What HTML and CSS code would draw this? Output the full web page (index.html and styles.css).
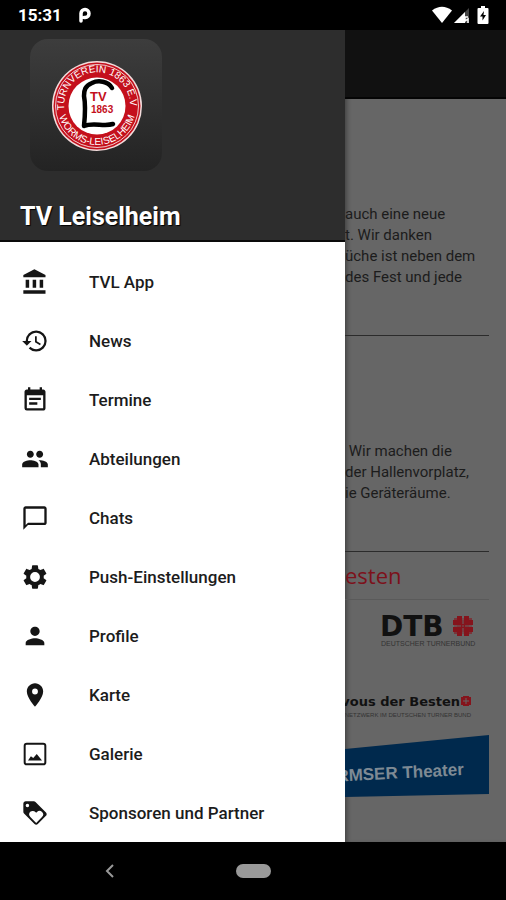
FILE: index.html
```html
<!DOCTYPE html>
<html lang="de">
<head>
<meta charset="utf-8">
<meta name="viewport" content="width=device-width, initial-scale=1">
<title>TV Leiselheim</title>
<link rel="stylesheet" href="styles.css">
</head>
<body>
<div class="status">
  <time class="clock">15:31</time>
  <svg class="status-p" viewBox="0 0 14 16" aria-hidden="true"><path d="M3 14V6.300a4 4 0 1 1 4.200 4.200H6" fill="none" stroke="#fff" stroke-width="3.500" stroke-linecap="round" stroke-linejoin="round"/></svg>
  <svg class="status-icons" viewBox="0 0 58 18" aria-hidden="true">
    <path d="M0 4.500Q10-3 20 4.500L10 17z" fill="#fff"/>
    <path d="M22 17L37 2V17z" fill="#444"/>
    <path d="M22 17L33 6v11z" fill="#fff"/>
    <path d="M33 11h3M33 11v4l3-2v4" fill="none" stroke="#fff" stroke-width="1.500"/>
    <path d="M49 0h4v2h2.500q1 0 1 1v14q0 1-1 1h-9q-1 0-1-1V3q0-1 1-1H49z" fill="#fff"/>
    <path d="M52 5l-4 5.500h2.500V14.500L54 9h-2.500z" fill="#000"/>
  </svg>
</div>

<div class="stage">
  <aside class="drawer">
    <header class="drawer-head">
      <div class="app-tile">
        <svg viewBox="0 0 92 92" role="img" aria-label="Vereinswappen">
          <defs>
            <path id="arc-top" d="M13.500 50a33 33 0 1 1 64.500 4"/>
            <path id="arc-bottom" d="M7 46a39 39 0 0 0 78 0"/>
          </defs>
          <circle cx="46" cy="46" r="45" fill="#f3dcdc"/>
          <circle cx="46" cy="46" r="43.500" fill="#c4101c"/>
          <circle cx="46" cy="46" r="41.500" fill="none" stroke="#f0cccc" stroke-width="1"/>
          <circle cx="46" cy="46" r="28.500" fill="#fff"/>
          <g class="ring-text">
            <text><textPath href="#arc-top">TURNVEREIN 1863 E.V</textPath></text>
            <text text-anchor="middle"><textPath href="#arc-bottom" startOffset="50%">WORMS-LEISELHEIM</textPath></text>
          </g>
          <path d="M61 28C57 21 47 20 41 23C34 26 33 30 33 36C35 46 34 56 33 66C42 62 53 67 62 64" fill="none" stroke="#000" stroke-width="4.500" stroke-linecap="round" stroke-linejoin="round"/>
          <g class="crest-text"><text x="39" y="41" class="crest-tv">TV</text><text x="40" y="53">1863</text></g>
        </svg>
      </div>
      <h1>TV Leiselheim</h1>
    </header>
    <nav aria-label="Hauptmenü">
      <ul class="menu">
        <li><a href="#app"><svg viewBox="0 0 24 24"><path d="M4 10v7h3v-7H4zm6 0v7h3v-7h-3zM2 22h19v-3H2v3zm14-12v7h3v-7h-3zm-4.500-9L2 6v2h19V6l-9.500-5z"/></svg>TVL App</a></li>
        <li><a href="#news"><svg viewBox="0 0 24 24"><path d="M13 3a9 9 0 0 0-9 9H1l3.890 3.890.07.14L9 12H6c0-3.870 3.130-7 7-7s7 3.130 7 7-3.130 7-7 7c-1.930 0-3.680-.79-4.940-2.060l-1.420 1.420A8.954 8.954 0 0 0 13 21a9 9 0 0 0 0-18zm-1 5v5l4.280 2.540.72-1.210-3.500-2.080V8H12z"/></svg>News</a></li>
        <li><a href="#termine"><svg viewBox="0 0 24 24"><path d="M17 10H7v2h10v-2zm2-7h-1V1h-2v2H8V1H6v2H5c-1.110 0-1.990.9-1.990 2L3 19a2 2 0 0 0 2 2h14c1.100 0 2-.9 2-2V5c0-1.100-.9-2-2-2zm0 16H5V8h14v11zm-5-5H7v2h7v-2z"/></svg>Termine</a></li>
        <li><a href="#abteilungen"><svg viewBox="0 0 24 24"><path d="M16 11c1.660 0 2.990-1.340 2.990-3S17.660 5 16 5c-1.660 0-3 1.340-3 3s1.340 3 3 3zm-8 0c1.660 0 2.990-1.340 2.990-3S9.660 5 8 5C6.340 5 5 6.340 5 8s1.340 3 3 3zm0 2c-2.330 0-7 1.170-7 3.500V19h14v-2.500c0-2.330-4.670-3.500-7-3.500zm8 0c-.29 0-.62.02-.97.05 1.160.84 1.970 1.970 1.970 3.450V19h6v-2.500c0-2.330-4.670-3.500-7-3.500z"/></svg>Abteilungen</a></li>
        <li><a href="#chats"><svg viewBox="0 0 24 24"><path d="M20 2H4c-1.100 0-2 .9-2 2v18l4-4h14c1.100 0 2-.9 2-2V4c0-1.100-.9-2-2-2zm0 14H6l-2 2V4h16v12z"/></svg>Chats</a></li>
        <li><a href="#push"><svg viewBox="0 0 24 24"><path d="M19.430 12.980c.04-.32.07-.64.07-.98s-.03-.66-.07-.98l2.110-1.650c.19-.15.24-.42.12-.64l-2-3.460c-.12-.22-.39-.3-.61-.22l-2.490 1c-.52-.4-1.080-.73-1.690-.98l-.38-2.650C14.460 2.180 14.250 2 14 2h-4c-.25 0-.46.18-.49.42l-.38 2.650c-.61.25-1.170.59-1.690.98l-2.490-1c-.23-.09-.49 0-.61.22l-2 3.460c-.13.22-.07.49.12.64l2.110 1.650c-.04.32-.07.65-.07.98s.03.66.07.98l-2.110 1.650c-.19.15-.24.42-.12.64l2 3.460c.12.22.39.3.61.22l2.490-1c.52.4 1.080.73 1.690.98l.38 2.650c.03.24.24.42.49.42h4c.25 0 .46-.18.49-.42l.38-2.650c.61-.25 1.170-.59 1.690-.98l2.490 1c.23.09.49 0 .61-.22l2-3.460c.12-.22.07-.49-.12-.64l-2.110-1.650zM12 16.200A4.200 4.200 0 1 1 12 7.800a4.200 4.200 0 0 1 0 8.400z"/></svg>Push-Einstellungen</a></li>
        <li><a href="#profile"><svg viewBox="0 0 24 24"><path d="M12 12c2.210 0 4-1.790 4-4s-1.790-4-4-4-4 1.790-4 4 1.790 4 4 4zm0 2c-2.670 0-8 1.340-8 4v2h16v-2c0-2.660-5.330-4-8-4z"/></svg>Profile</a></li>
        <li><a href="#karte"><svg viewBox="0 0 24 24"><path d="M12 2C8.130 2 5 5.130 5 9c0 5.250 7 13 7 13s7-7.750 7-13c0-3.870-3.130-7-7-7zm0 9.500a2.500 2.500 0 1 1 0-5 2.500 2.500 0 0 1 0 5z"/></svg>Karte</a></li>
        <li><a href="#galerie"><svg viewBox="0 0 24 24"><path d="M19 4H5a1 1 0 0 0-1 1v14a1 1 0 0 0 1 1h14a1 1 0 0 0 1-1V5a1 1 0 0 0-1-1zM5 2.300h14A2.700 2.700 0 0 1 21.700 5v14a2.700 2.700 0 0 1-2.700 2.700H5A2.700 2.700 0 0 1 2.300 19V5A2.700 2.700 0 0 1 5 2.300zM6 17.500l2.500-3.500 2 1.500 3-3.500 4.500 5.500z"/></svg>Galerie</a></li>
        <li><a href="#sponsoren"><svg viewBox="0 0 24 24"><path d="M21.410 11.580l-9-9C12.050 2.220 11.550 2 11 2H4c-1.100 0-2 .9-2 2v7c0 .55.22 1.050.59 1.420l9 9c.36.36.86.58 1.410.58s1.050-.22 1.410-.59l7-7c.37-.36.59-.86.59-1.410s-.23-1.060-.59-1.420zM5.500 7a1.500 1.500 0 1 1 0-3 1.500 1.500 0 0 1 0 3zm12.500 8.500L13 20.500l-5-5A3 3 0 0 1 10.200 10.200c.9 0 1.600.3 2.100.9l.7.7.7-.7a3 3 0 0 1 4.300 4.400z"/></svg>Sponsoren und Partner</a></li>
      </ul>
    </nav>
  </aside>

  <main class="page">
    <div class="appbar"></div>
    <article class="post">
      <p>auch eine neue<br>t. Wir danken<br>üche ist neben dem<br>des Fest und jede</p>
    </article>
    <article class="post">
      <p>&nbsp;Wir machen die<br>der Hallenvorplatz,<br>ie Geräteräume.</p>
    </article>
    <section class="sponsors">
      <h2>esten</h2>
      <svg class="dtb" viewBox="0 0 144 36" role="img" aria-label="DTB">
        <text x="35" y="21" class="dtb-name">DTB</text>
        <g fill="#85141c">
          <path d="M112 1h5v20h-5zM119 1h5v20h-5zM108 5h20v5h-20zM108 12h20v5h-20z"/>
          <path d="M109 3h18v16h-18z" fill-opacity=".6"/>
        </g>
        <path d="M108 11h8M120 11h8M118 1v8M118 13v8" fill="none" stroke="#666" stroke-width="1"/>
        <text x="36" y="31" class="dtb-sub">DEUTSCHER TURNERBUND</text>
      </svg>
      <svg class="rendezvous" viewBox="0 0 144 26" role="img" aria-label="Rendezvous der Besten">
        <text x="115" y="13" text-anchor="end" class="rv-name">vous der Besten</text>
        <path d="M118 3h6v10h-6zM116 4h10v8h-10z" fill="#85141c"/>
        <path d="M118 8h6M121 5v6" fill="none" stroke="#666" stroke-width="1"/>
        <text x="126" y="24" text-anchor="end" class="rv-sub">NETZWERK IM DEUTSCHEN TURNER BUND</text>
      </svg>
      <svg class="theater" viewBox="0 0 144 62" role="img" aria-label="Wormser Theater">
        <path d="M0 14L144 0v59L0 62z" fill="#00294d"/>
        <text x="119" y="40" text-anchor="end" transform="rotate(-3 119 40)">RMSER Theater</text>
      </svg>
    </section>
  </main>
</div>

<div class="navbar">
  <button class="back" aria-label="Zurück"><svg viewBox="0 0 10 14"><path d="M8 1L2 7l6 6" fill="none" stroke="#999" stroke-width="2"/></svg></button>
  <button class="home" aria-label="Startseite"></button>
</div>
</body>
</html>
```
FILE: styles.css
```css
* { box-sizing: border-box; }

body {
  margin: 0;
  min-height: 100vh;
  display: flex;
  flex-direction: column;
  background: #000;
  font-family: Roboto, "Liberation Sans", sans-serif;
}

h1, h2, p, ul { margin: 0; padding: 0; }
svg { display: block; }

.status {
  height: 30px;
  padding: 0 16px 0 18px;
  display: flex;
  align-items: center;
  gap: 16px;
  color: #fff;
}
.clock { font-size: 17px; font-weight: 700; }
.status-p { width: 14px; height: 16px; }
.status-icons { width: 58px; height: 18px; margin-left: auto; }

.stage {
  flex: 1;
  display: flex;
  overflow: hidden;
}

.drawer {
  flex: 0 0 345px;
  max-width: 80%;
  background: #fff;
}
.drawer-head {
  height: 212px;
  padding: 9px 20px 8px;
  display: flex;
  flex-direction: column;
  justify-content: space-between;
  background: #2d2d2d;
  border-bottom: 2px solid #0a0a0a;
}
.app-tile {
  width: 132px;
  height: 132px;
  margin-left: 10px;
  padding: 2px 0 0 2px;
  display: grid;
  place-items: center;
  border-radius: 18px;
  background: linear-gradient(#3d3d3d, #232323);
}
.app-tile svg { width: 92px; height: 92px; }
.ring-text {
  font: 400 10px "Liberation Sans", sans-serif;
  fill: #fff;
}
.crest-text {
  font: 700 10px "Liberation Sans", sans-serif;
  fill: #c4101c;
}
.crest-text .crest-tv { font-size: 13px; }

h1 {
  font-size: 25px;
  line-height: 30px;
  font-weight: 700;
  color: #fff;
  text-shadow: 1px 1px 1px #000;
}

.menu {
  padding-top: 10px;
  list-style: none;
}
.menu a {
  height: 59px;
  padding-left: 21px;
  display: flex;
  align-items: center;
  gap: 40px;
  font-size: 17px;
  font-weight: 500;
  color: #1c1c1c;
  text-decoration: none;
}
.menu svg { width: 28px; height: 28px; fill: #151515; }

.page {
  flex: 1;
  min-width: 0;
  overflow: hidden;
  background: #666;
  box-shadow: inset 4px 0 4px -2px #444;
  color: #1c1c1c;
  white-space: nowrap;
}
.appbar {
  height: 69px;
  background: #111;
  border-bottom: 2px solid #050505;
}
.post {
  margin-right: 17px;
  padding: 105px 0 47px;
  border-bottom: 1px solid #2b2b2b;
  font-size: 15px;
  line-height: 21px;
}

.sponsors { margin-right: 17px; }
h2 {
  padding: 7px 0 8px;
  border-bottom: 1px solid #5a5a5a;
  font: 400 22px/32px "Open Sans", "Noto Sans", sans-serif;
  color: #7d111b;
}
.sponsors svg { width: 100%; }
.dtb { margin-top: 15px; }
.rendezvous { margin-top: 42px; }
.theater { margin-top: 16px; }
.dtb-name { font: 700 28px "DejaVu Sans", sans-serif; fill: #111; }
.dtb-sub { font: 400 7px "Liberation Sans", sans-serif; fill: #333; }
.rv-name { font: 700 13px "DejaVu Sans", sans-serif; fill: #111; }
.rv-sub { font: 400 6px "Liberation Sans", sans-serif; fill: #333; }
.theater text { font: 700 17px "Liberation Sans", sans-serif; fill: #7e8a94; }

.navbar {
  height: 58px;
  display: grid;
  grid-template-columns: 1fr 35px 1fr;
  column-gap: 16px;
  align-items: center;
  justify-items: center;
}
.navbar button { padding: 0; border: 0; background: none; }
.back svg { width: 10px; height: 14px; }
.navbar .home {
  width: 35px;
  height: 14px;
  border-radius: 7px;
  background: #999;
}
```
